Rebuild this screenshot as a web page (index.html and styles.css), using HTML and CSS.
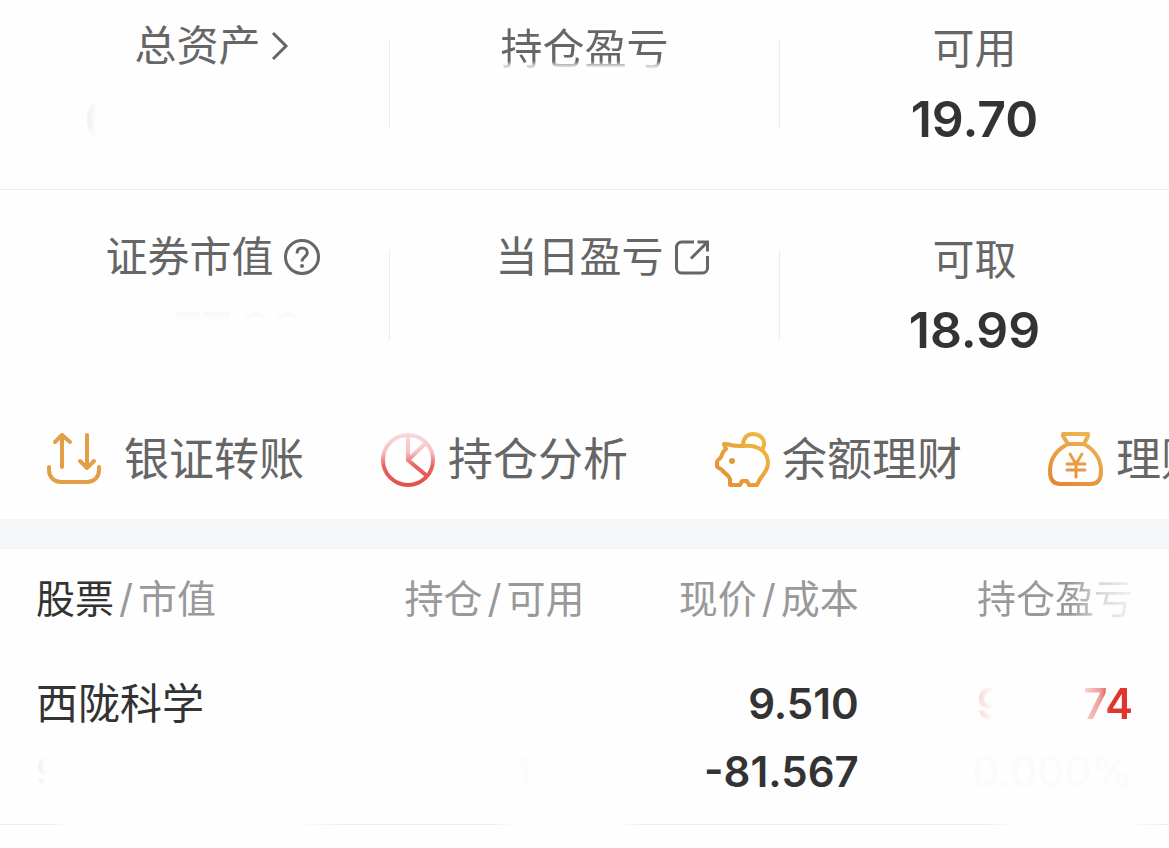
FILE: index.html
```html
<!DOCTYPE html>
<html lang="zh-CN">
<head>
    <meta charset="UTF-8">
    <meta name="viewport" content="width=device-width, initial-scale=1.0">
    <title>持仓</title>
    <link rel="stylesheet" href="styles.css">
</head>
<body>

    <section class="summary">
        <div class="summary-row summary-row-first">
            <div class="cell">
                <a class="label label-icon" href="#">总资产
                    <svg class="chevron" viewBox="0 0 20 36" fill="none" stroke="currentColor" stroke-width="3"><path d="M2 5l13 13L2 31"/></svg>
                </a>
                <div class="value value-left"><span class="fade-right">6</span></div>
            </div>
            <div class="divider"></div>
            <div class="cell">
                <div class="label fade-bottom">持仓盈亏</div>
                <div class="value"></div>
            </div>
            <div class="divider"></div>
            <div class="cell">
                <div class="label">可用</div>
                <div class="value">19.70</div>
            </div>
        </div>

        <div class="summary-row">
            <div class="cell">
                <a class="label label-icon" href="#">证券市值
                    <svg class="icon" viewBox="0 0 36 36" fill="none" stroke="currentColor" stroke-width="3"><circle cx="18" cy="18" r="16.5"/><path d="M13 14.5c0-3.6 2.200-5.500 5.200-5.500s5.100 2 5.100 4.700c0 4-5.300 4.300-5.300 8.800"/><circle cx="18" cy="27" r="2" fill="currentColor" stroke="none"/></svg>
                </a>
                <div class="value value-right"><span class="fade-top">77.99</span></div>
            </div>
            <div class="divider"></div>
            <div class="cell">
                <a class="label label-icon" href="#">当日盈亏
                    <svg class="icon" viewBox="0 0 36 36" fill="none" stroke="currentColor" stroke-width="3"><path d="M20 3H7.500a5 5 0 0 0-5 5v21a5 5 0 0 0 5 5h21a5 5 0 0 0 5-5V17"/><path d="M23.500 3h10v9.500M33 3.500L17 19.500"/></svg>
                </a>
                <div class="value"></div>
            </div>
            <div class="divider"></div>
            <div class="cell">
                <div class="label">可取</div>
                <div class="value">18.99</div>
            </div>
        </div>
    </section>

    <nav class="actions">
        <a class="action action-transfer" href="#">
            <svg class="action-icon" viewBox="0 0 56 56" fill="none" stroke="#e39f45" stroke-width="4" stroke-linecap="round" stroke-linejoin="round"><path d="M3 35v3c0 7 5 12 12 12h26c7 0 12-5 12-12v-3"/><path d="M16 35V3M9 10l7-7 8 7M41 3v33M34 29l7 7 7-7"/></svg>
            <span>银证转账</span>
        </a>
        <a class="action" href="#">
            <svg class="action-icon" viewBox="0 0 56 56" fill="none" stroke="url(#pie)" stroke-width="4">
                <defs><linearGradient id="pie" gradientUnits="userSpaceOnUse" x1="0" y1="0" x2="0" y2="56"><stop offset="0" stop-color="#f9dcdc"/><stop offset=".35" stop-color="#f5c2c2"/><stop offset=".6" stop-color="#e76464"/><stop offset="1" stop-color="#e64b49"/></linearGradient></defs>
                <circle cx="28" cy="28" r="25"/><path d="M28 3v25l19 16M28 28l18-17"/>
            </svg>
            <span>持仓分析</span>
        </a>
        <a class="action" href="#">
            <svg class="action-icon" viewBox="0 0 56 56" fill="none" stroke="url(#gold)" stroke-width="4" stroke-linejoin="round">
                <defs><linearGradient id="gold" gradientUnits="userSpaceOnUse" x1="56" y1="0" x2="0" y2="56"><stop offset="0" stop-color="#f0bd3f"/><stop offset="1" stop-color="#e28b36"/></linearGradient></defs>
                <path d="M29 14C24 14 20 14 17 13C14 12 12 12 10 12L12 17C9 19 8 22 7 25C6 27 3 28 3 30V34C3 36 6 36 8 38C11 42 15 43 16 47V53H26L28 49H33L35 53H43L46 47C50 42 54 37 54 31C54 20 44 12 29 14Z"/>
                <path d="M29 12C30 5 34 2 39 2C46 2 51 7 50 13L48 19"/>
                <circle cx="18" cy="29" r="3" fill="#e59a39" stroke="none"/>
            </svg>
            <span>余额理财</span>
        </a>
        <a class="action" href="#">
            <svg class="action-icon" viewBox="0 0 56 56" fill="none" stroke="url(#bag)" stroke-width="4" stroke-linejoin="round" stroke-linecap="round">
                <defs><linearGradient id="bag" gradientUnits="userSpaceOnUse" x1="40" y1="0" x2="10" y2="56"><stop offset="0" stop-color="#eeb453"/><stop offset="1" stop-color="#e58634"/></linearGradient></defs>
                <path d="M15 2H40V4L36 12H20L15 4ZM20 12C8 18 2 28 2 39C2 47 5 52 12 52H43C50 52 53 47 53 39C53 28 47 18 36 12"/>
                <path d="M22 22l6 10 6-10M28 32v13M19 32h18M19 38h18" stroke-width="3"/>
            </svg>
            <span>理财</span>
        </a>
    </nav>

    <div class="band"></div>

    <table class="holdings">
        <thead>
            <tr>
                <th><strong>股票</strong><span class="slash">/</span>市值</th>
                <th>持仓<span class="slash">/</span>可用</th>
                <th>现价<span class="slash">/</span>成本</th>
                <th><span class="fade-end">持仓盈亏</span></th>
            </tr>
        </thead>
        <tbody>
            <tr>
                <td>
                    <div class="stock-name">西陇科学</div>
                    <div class="line ghost"><span class="fade-right">9</span></div>
                </td>
                <td>
                    <div class="line"></div>
                    <div class="line ghost ghost-count">1</div>
                </td>
                <td>
                    <div class="line">9.510</div>
                    <div class="line">-81.567</div>
                </td>
                <td>
                    <div class="line profit"><span class="profit-lead">9</span><span class="profit-tail">74</span></div>
                    <div class="line ghost ghost-rate">0.000%</div>
                </td>
            </tr>
        </tbody>
    </table>
    <div class="rule"></div>

</body>
</html>
```
FILE: styles.css
```css
:root {
    --text: #333333;
    --label: #666666;
    --muted: #999999;
    --line: #ececec;
    --red: #e0352f;
}

body {
    margin: 0;
    font-family: Inter, "Noto Sans CJK SC", sans-serif;
    background: #fefefe;
    color: var(--text);
    overflow-x: hidden;
}

a {
    color: inherit;
    text-decoration: none;
}

/* Asset summary */
.summary-row {
    display: grid;
    grid-template-columns: 1fr 1px 1fr 1px 1fr;
    align-items: center;
    padding: 40px 0;
}

.summary-row-first {
    padding-top: 19px;
    border-bottom: 1px solid var(--line);
}

.divider {
    height: 90px;
    background: var(--line);
}

.cell {
    display: flex;
    flex-direction: column;
    align-items: center;
}

.label {
    font-size: 42px;
    line-height: 60px;
    color: var(--label);
}

.label-icon {
    display: flex;
    align-items: center;
    gap: 10px;
    line-height: 54px;
    margin-bottom: 6px;
    margin-right: -36px;
}

.icon {
    width: 36px;
    height: 36px;
}

.chevron {
    width: 20px;
    height: 36px;
}

.value {
    width: 220px;
    height: 60px;
    margin-top: 10px;
    font-size: 50px;
    font-weight: 600;
    line-height: 60px;
    text-align: center;
}

.value-left { text-align: left; }
.value-right { text-align: right; }

/* Partly hidden text */
.fade-right,
.fade-top,
.fade-bottom,
.fade-end,
.profit-lead,
.profit-tail {
    color: transparent;
    background-clip: text;
    -webkit-background-clip: text;
}

.fade-right { background-image: linear-gradient(to right, #ececec, #fefefe 40%); }
.fade-top { background-image: linear-gradient(#f9f9f9 25%, #fefefe 34%); }
.fade-bottom { background-image: linear-gradient(var(--label) 70%, #d6d6d6 78%); }
.fade-end { background-image: linear-gradient(to right, var(--muted) 60%, #d6d6d6 78%, #f2f2f2); }

/* Shortcuts */
.actions {
    display: flex;
    align-items: center;
    height: 119px;
    padding-left: 46px;
    overflow: hidden;
}

.action {
    display: flex;
    flex: 0 0 334px;
    align-items: center;
    gap: 12px;
    font-size: 45px;
    line-height: 60px;
    color: var(--label);
    white-space: nowrap;
}

.action-transfer { gap: 22px; }

.action-icon {
    flex: none;
    width: 56px;
    height: 56px;
}

.band {
    height: 30px;
    background: #f5f6f8;
}

/* Holdings */
.holdings {
    width: 100%;
    padding: 0 36px;
    border-spacing: 0;
    table-layout: fixed;
}

.holdings th,
.holdings td {
    padding: 0;
    text-align: right;
    vertical-align: top;
    white-space: nowrap;
}

.holdings th:first-child,
.holdings td:first-child {
    text-align: left;
}

.holdings th {
    font-size: 39px;
    font-weight: 400;
    line-height: 100px;
    color: var(--muted);
}

.holdings strong {
    font-weight: 400;
    color: var(--text);
}

.holdings td {
    padding: 21px 0 18px;
}

.slash { margin: 0 5px; }

.stock-name {
    font-size: 42px;
    line-height: 68px;
}

.line {
    height: 68px;
    font-size: 42px;
    font-weight: 600;
    line-height: 68px;
}

.ghost { font-weight: 500; }

.ghost-count {
    padding-right: 52px;
    color: #fcfcfc;
}

.profit {
    display: flex;
    justify-content: space-between;
    padding-left: 118px;
}

.profit-lead { background-image: linear-gradient(to right, #f8d5d4, #fefefe 60%); }
.profit-tail { background-image: linear-gradient(to right, #f9dad9, #ee9a96 35%, var(--red) 55%); }
.ghost-rate { color: #fdfafa; }

.rule {
    height: 1px;
    background: linear-gradient(to right, var(--line) 4%, transparent 6%, transparent 25%, var(--line) 30%, var(--line) 42%, transparent 44%, transparent 53%, var(--line) 55%, var(--line) 84%, transparent 87%, transparent 96%, var(--line));
}
```
